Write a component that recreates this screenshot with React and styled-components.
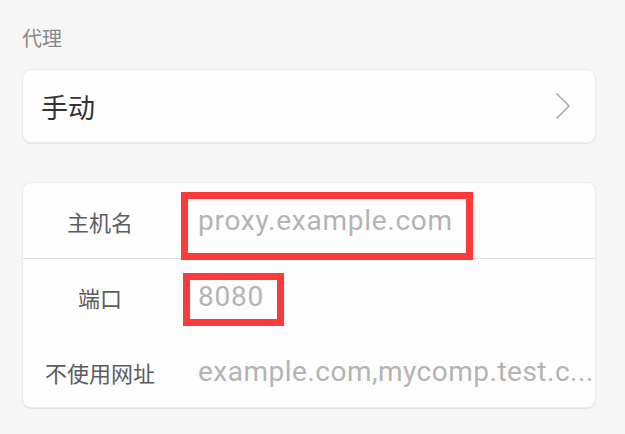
import React from 'react'
import styled, { createGlobalStyle } from 'styled-components'

const GlobalStyle = createGlobalStyle`
  html, body {
    margin: 0;
    padding: 0;
    background: #f7f7f7;
  }
  body {
    font-family: Roboto, "Noto Sans CJK SC", sans-serif;
  }
`

const StyledPage = styled.div`
  width: 625px;
  height: 434px;
  box-sizing: border-box;
  padding: 24px 29px 0 22px;
  display: flex;
  flex-direction: column;
  overflow: hidden;
`

const StyledSectionTitle = styled.div`
  font-family: "Noto Sans CJK SC", sans-serif;
  font-size: 20px;
  line-height: 28px;
  color: #8a8a8a;
  margin-bottom: 17px;
`

const StyledCard = styled.div`
  background: #fdfdfd;
  border-radius: 9px;
  border: 1px solid #ececec;
  box-shadow: 0 1px 1px rgba(0, 0, 0, 0.08);
  box-sizing: border-box;
`

const StyledModeCard = styled(StyledCard)`
  height: 74px;
  display: flex;
  align-items: center;
  justify-content: space-between;
  padding: 0 24px 0 18px;
  margin-bottom: 39px;
`

const StyledModeText = styled.span`
  font-family: "Noto Sans CJK SC", sans-serif;
  font-size: 27px;
  color: #333;
`

const StyledFormCard = styled(StyledCard)`
  height: 226px;
  display: flex;
  flex-direction: column;
`

const StyledRow = styled.div`
  height: ${p => p.$height}px;
  display: flex;
  align-items: center;
  padding-right: 2px;
  border-bottom: ${p => (p.$divider ? '1px solid #dedede' : 'none')};
  flex-shrink: 0;
  min-width: 0;
`

const StyledLabel = styled.span`
  width: 154px;
  flex-shrink: 0;
  text-align: center;
  font-family: "Noto Sans CJK SC", sans-serif;
  font-size: 22px;
  color: #5c5c5c;
`

const StyledValue = styled.span`
  margin-left: 21px;
  font-family: Roboto, sans-serif;
  font-size: 28px;
  line-height: 34px;
  letter-spacing: ${p => (p.$tight ? '0.5px' : '0.75px')};
  color: #b4b4b4;
  white-space: nowrap;
  min-width: 0;
  position: relative;

  &::after {
    content: ${p => (p.$box ? "''" : 'none')};
    position: absolute;
    left: ${p => p.$box && p.$box[0]}px;
    right: ${p => p.$box && p.$box[1]}px;
    top: ${p => p.$box && p.$box[2]}px;
    bottom: ${p => p.$box && p.$box[3]}px;
    border: ${p => p.$box && p.$box[4]}px solid #fd3a3a;
  }
`

const Chevron = () => (
  <svg width="16" height="28" viewBox="0 0 16 28">
    <polyline points="1.5,1.5 14,14 1.5,26.5" fill="none" stroke="#ababab" strokeWidth="1.6" />
  </svg>
)

const App = () => {
  return (
    <StyledPage>
      <GlobalStyle />
      <StyledSectionTitle>{'代理'}</StyledSectionTitle>
      <StyledModeCard>
        <StyledModeText>{'手动'}</StyledModeText>
        <Chevron />
      </StyledModeCard>
      <StyledFormCard>
        <StyledRow $height={75} $divider>
          <StyledLabel>{'主机名'}</StyledLabel>
          <StyledValue $box={[-17, -20, -12, -22, 7]}>{'proxy.example.com'}</StyledValue>
        </StyledRow>
        <StyledRow $height={76}>
          <StyledLabel>{'端口'}</StyledLabel>
          <StyledValue $box={[-15, -20, -7, -12, 7]}>{'8080'}</StyledValue>
        </StyledRow>
        <StyledRow $height={73}>
          <StyledLabel>{'不使用网址'}</StyledLabel>
          <StyledValue $tight>{'example.com,mycomp.test.c...'}</StyledValue>
        </StyledRow>
      </StyledFormCard>
    </StyledPage>
  )
}

export default App
